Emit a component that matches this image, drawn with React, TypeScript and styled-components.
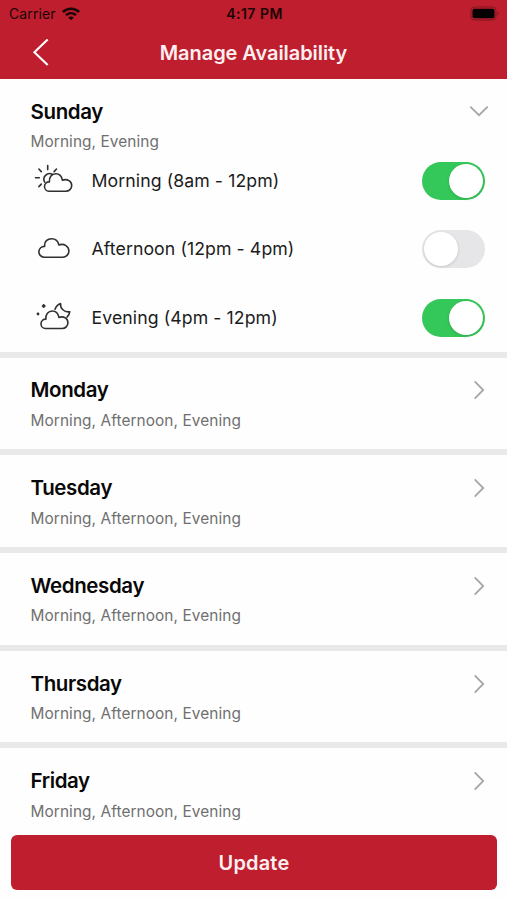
import React, { useState } from "react";
import styled, { createGlobalStyle } from "styled-components";

const GlobalStyle = createGlobalStyle`
  * { box-sizing: border-box; }
  html, body { margin: 0; padding: 0; }
  body {
    font-family: Inter, "Liberation Sans", sans-serif;
    background: #fff;
    overflow: hidden;
  }
  button { font: inherit; border: 0; padding: 0; background: none; cursor: pointer; }
`;

const Screen = styled.main`
  width: 507px;
  height: 900px;
  display: flex;
  flex-direction: column;
  overflow: hidden;
  background: #fefefe;
`;

const Header = styled.header`
  flex: none;
  height: 79px;
  background: #be1e2d;
`;

const StatusBar = styled.div`
  height: 27px;
  padding: 0 7px 0 9px;
  display: grid;
  grid-template-columns: 1fr auto 1fr;
  align-items: center;
  color: #1c0506;
  font-size: 14px;
  line-height: 27px;
`;

const Carrier = styled.div`
  display: flex;
  align-items: center;
  gap: 6px;
  letter-spacing: 0.1px;
`;

const Clock = styled.div`
  font-weight: 600;
  letter-spacing: 0.5px;
`;

const BatterySlot = styled.div`
  display: flex;
  justify-content: flex-end;
`;

const NavBar = styled.nav`
  height: 52px;
  padding: 0 31px;
  display: grid;
  grid-template-columns: 20px 1fr 20px;
  align-items: center;
`;

const BackButton = styled.button`
  display: flex;
`;

const Title = styled.h1`
  margin: 0;
  text-align: center;
  color: #fdeff0;
  font-size: 20px;
  font-weight: 600;
  line-height: 51px;
  letter-spacing: -0.06px;
`;

const DayList = styled.div`
  flex: 1;
  min-height: 0;
  overflow: hidden;
`;

const DaySection = styled.section<{ $open?: boolean }>`
  height: ${(p) => (p.$open ? "278.6px" : "97.7px")};
  border-bottom: 6px solid #e9e9e9;
  padding: ${(p) => (p.$open ? "18.5px" : "18.9px")} 22px 0 30.5px;
`;

const DayHeader = styled.div`
  display: flex;
  justify-content: space-between;
  align-items: center;
  height: 28px;
`;

const DayName = styled.h2`
  margin: 0;
  font-size: 20.5px;
  font-weight: 600;
  line-height: 28px;
  letter-spacing: -0.38px;
  color: #080808;
`;

const ChevronSlot = styled.span<{ $open?: boolean }>`
  display: flex;
  width: 12px;
  justify-content: center;
  transform: ${(p) => (p.$open ? "translateY(-1px) rotate(90deg)" : "none")};

  svg { flex: none; }
`;

const Summary = styled.p`
  margin: 5.5px 0 0;
  font-size: 15.4px;
  line-height: 22px;
  letter-spacing: 0.08px;
  color: #707070;
`;

const Options = styled.div`
  margin-top: 8.7px;
  display: flex;
  flex-direction: column;
  gap: 30.6px;
`;

const Option = styled.div`
  display: grid;
  grid-template-columns: 61px 1fr auto;
  align-items: center;
  height: 38px;
`;

const OptionLabel = styled.span`
  font-size: 17.7px;
  line-height: 38px;
  letter-spacing: 0.08px;
  color: #1c1c1c;
`;

const Switch = styled.button<{ $on: boolean }>`
  display: flex;
  justify-content: ${(p) => (p.$on ? "flex-end" : "flex-start")};
  align-items: center;
  width: 63px;
  height: 38px;
  padding: 2px;
  border-radius: 19px;
  background: ${(p) => (p.$on ? "#34c759" : "#e6e6e8")};
`;

const Knob = styled.span`
  width: 34px;
  height: 34px;
  border-radius: 50%;
  background: #fff;
  box-shadow: 0 1px 3px rgba(0, 0, 0, 0.14);
`;

const Footer = styled.footer`
  flex: none;
  height: 65px;
  padding: 0 10px 10px 11px;
`;

const UpdateButton = styled.button`
  width: 100%;
  height: 55px;
  border-radius: 6px;
  background: #be1e2d;
  color: #fdeff0;
  font-size: 20px;
  font-weight: 600;
  letter-spacing: 0.15px;
`;

const WifiIcon = () => (
  <svg width="18" height="14" viewBox="0 0 18 14" fill="none" stroke="currentColor" strokeWidth="2.5">
    <path d="M.9 5C5.4.7 12.6.7 17.1 5" />
    <path d="M4 8.2c2.9-2.7 7.1-2.7 10 0" />
    <path d="M9 13.3 6.2 10.6c1.6-1.5 4-1.5 5.6 0Z" fill="currentColor" stroke="none" />
  </svg>
);

const BatteryIcon = () => (
  <svg width="30" height="15" viewBox="0 0 30 15">
    <rect x="1" y="1" width="25" height="13" rx="3.5" fill="none" stroke="#7f1720" strokeWidth="1" />
    <rect x="2.5" y="2.8" width="22" height="9.4" rx="2" fill="#050001" />
    <path d="M27.5 5.5c1.6.7 1.6 3.3 0 4Z" fill="#7f1720" />
  </svg>
);

const BackIcon = () => (
  <svg width="20" height="28" viewBox="0 0 20 28" fill="none" stroke="#fff" strokeWidth="2.1">
    <path d="M16.7.4 3.4 13.2l13.3 12.8" />
  </svg>
);

const ChevronIcon = () => (
  <svg width="20" height="20" viewBox="0 0 20 20" fill="none" stroke="#a6a6a6" strokeWidth="1.8">
    <path d="m5.7 1.3 8.5 8.7-8.5 8.7" />
  </svg>
);

const Drawing = styled.svg`
  display: block;
  width: 44px;
  height: 38px;
  fill: none;
  stroke: #303030;
  stroke-width: 1.6;
  stroke-linecap: round;
  stroke-linejoin: round;
`;

const MorningIcon = () => (
  <Drawing viewBox="0.5 0 44 38">
    <path d="M17.2 3.6V7.6M8.4 7l2.4 2.6M26 7l-2.4 2.6M5 15.7h3.8M8.4 24.6l2.4-2.5" />
    <path d="M14.2 20.2A5.7 5.7 0 0 1 21.8 12.3" />
    <path d="M18.5 29.3A4.7 4.7 0 0 1 18.9 19.9C18.4 15 21.3 11.8 25.3 11.8c3.5 0 5.9 2.4 6.6 6.4 5.1-1.7 9.3 1.2 9.3 5.3 0 3.3-2.6 5.8-5.9 5.8Z" />
  </Drawing>
);

const AfternoonIcon = () => (
  <Drawing viewBox="0.5 0 44 38">
    <path d="M13.4 27.2A5.4 5.4 0 0 1 14.1 16.4C13.6 11.4 17 8.7 21.2 8.7c3.8 0 6.4 2.4 7.1 6.2 5.5-1.7 10.1 1.5 10.1 6 0 3.5-2.8 6.3-6.2 6.3Z" />
  </Drawing>
);

const EveningIcon = () => (
  <Drawing viewBox="0.5 0 44 38">
    <path d="M15 29.5A4.7 4.7 0 0 1 15.4 20.1C14.9 15.2 17.8 12 21.8 12c3.5 0 5.9 2.4 6.6 6.4 5.1-1.7 9 1.2 9 5.3 0 3.3-2.5 5.8-5.8 5.8Z" />
    <path d="M24.5 10.3c1.1-3 2.7-4.9 5.5-5.8-.4 4.8 3.7 9.2 9.3 8.2-.2 2-1.2 3.9-2.8 5.4" />
    <path d="M13.2 6.1v1.8M12.3 7h1.8" strokeWidth="2.2" />
    <path d="M7.5 14.9v.1" strokeWidth="2.8" />
  </Drawing>
);

const periods = [
  { name: "Morning", hours: "8am - 12pm", Icon: MorningIcon },
  { name: "Afternoon", hours: "12pm - 4pm", Icon: AfternoonIcon },
  { name: "Evening", hours: "4pm - 12pm", Icon: EveningIcon },
];

const otherDays = ["Monday", "Tuesday", "Wednesday", "Thursday", "Friday"];

export default function App() {
  const [enabled, setEnabled] = useState([true, false, true]);
  const toggle = (index: number) =>
    setEnabled((values) => values.map((value, i) => (i === index ? !value : value)));

  return (
    <Screen>
      <GlobalStyle />
      <Header>
        <StatusBar>
          <Carrier>
            Carrier
            <WifiIcon />
          </Carrier>
          <Clock>4:17 PM</Clock>
          <BatterySlot>
            <BatteryIcon />
          </BatterySlot>
        </StatusBar>
        <NavBar>
          <BackButton aria-label="Back">
            <BackIcon />
          </BackButton>
          <Title>Manage Availability</Title>
        </NavBar>
      </Header>
      <DayList>
        <DaySection $open>
          <DayHeader>
            <DayName>Sunday</DayName>
            <ChevronSlot $open>
              <ChevronIcon />
            </ChevronSlot>
          </DayHeader>
          <Summary>
            {periods.filter((_, i) => enabled[i]).map((p) => p.name).join(", ")}
          </Summary>
          <Options>
            {periods.map(({ name, hours, Icon }, i) => (
              <Option key={name}>
                <Icon />
                <OptionLabel>{`${name} (${hours})`}</OptionLabel>
                <Switch
                  $on={enabled[i]}
                  role="switch"
                  aria-checked={enabled[i]}
                  aria-label={name}
                  onClick={() => toggle(i)}
                >
                  <Knob />
                </Switch>
              </Option>
            ))}
          </Options>
        </DaySection>
        {otherDays.map((day) => (
          <DaySection key={day}>
            <DayHeader>
              <DayName>{day}</DayName>
              <ChevronSlot>
                <ChevronIcon />
              </ChevronSlot>
            </DayHeader>
            <Summary>Morning, Afternoon, Evening</Summary>
          </DaySection>
        ))}
      </DayList>
      <Footer>
        <UpdateButton>Update</UpdateButton>
      </Footer>
    </Screen>
  );
}
